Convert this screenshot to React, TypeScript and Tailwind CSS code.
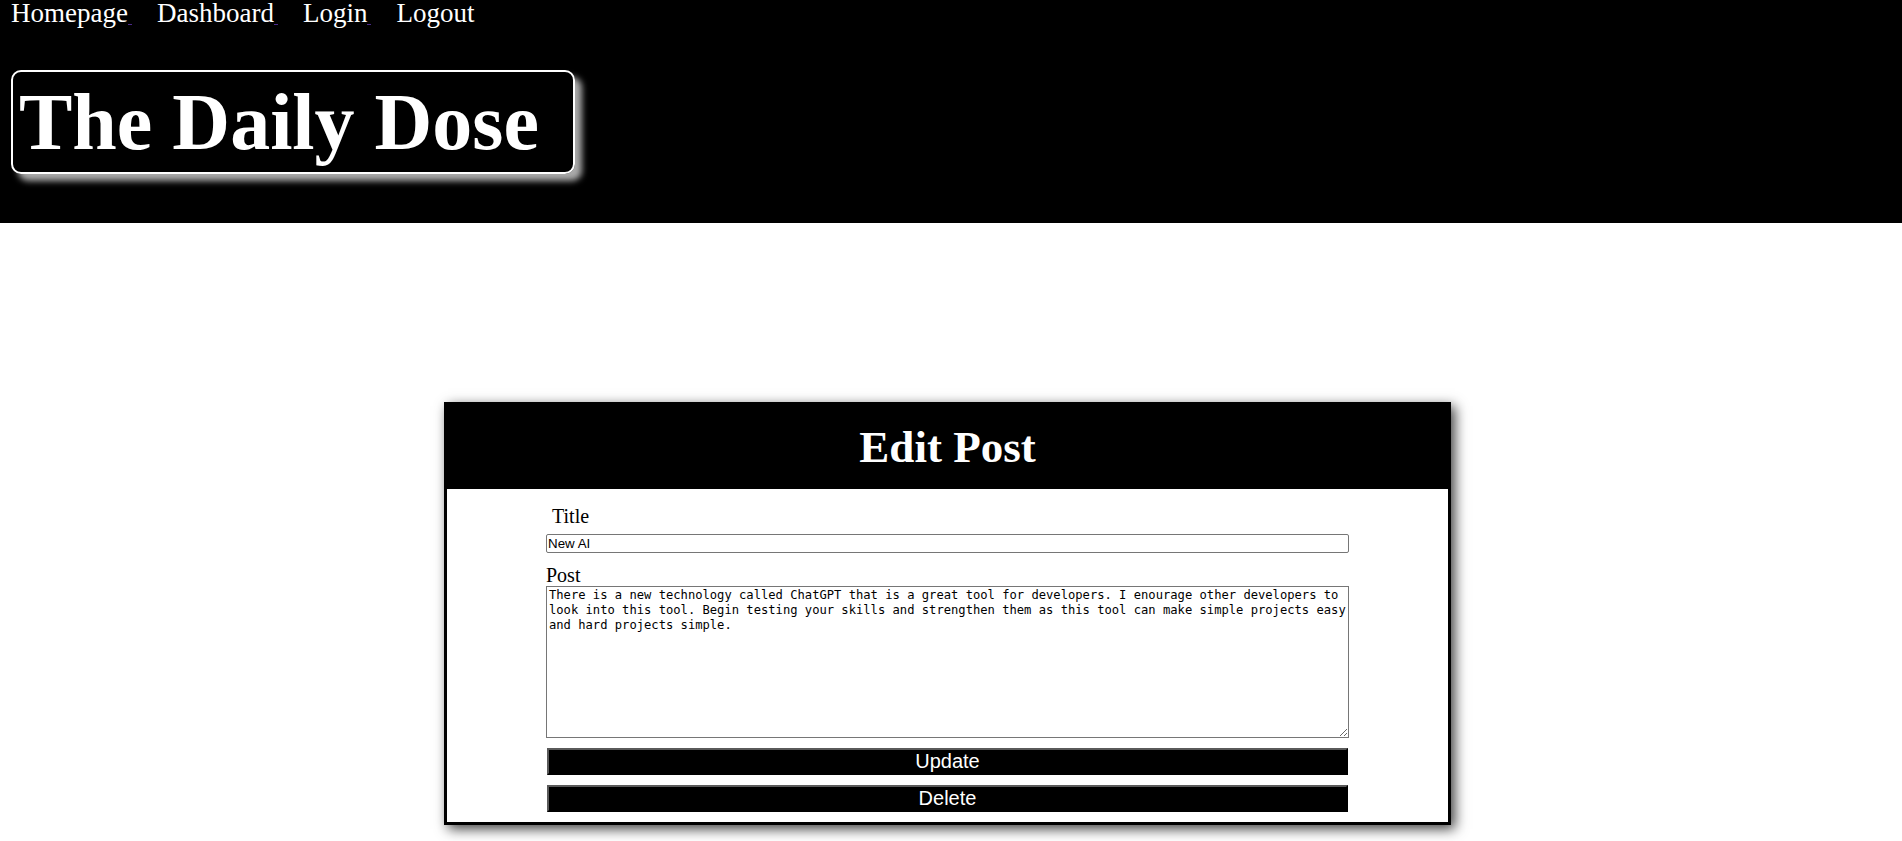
import React from "react";

const links = ["Homepage", "Dashboard", "Login", "Logout"];

const postText =
  "There is a new technology called ChatGPT that is a great tool for developers. I enourage other developers to look into this tool. Begin testing your skills and strengthen them as this tool can make simple projects easy and hard projects simple.";

function Header() {
  return (
    <header className="bg-black h-[223px] text-white">
      <nav className="flex gap-[25px] pl-[11px] text-[27px] leading-[26px]">
        {links.map((l, i) => (
          <a key={l} href="#" className="whitespace-nowrap">
            {l}
            {i < 3 && <span className="inline-block w-[4px] h-px bg-[#4b2a8a] align-[-3px]" />}
          </a>
        ))}
      </nav>
      <div className="mt-[44px] ml-[11px] inline-block border-2 border-white rounded-[10px] pl-[6px] pr-[34px] shadow-[7px_7px_6px_#aaa]">
        <h1 className="text-[80px] leading-[100px] font-bold whitespace-nowrap">The Daily Dose</h1>
      </div>
    </header>
  );
}

function EditPost() {
  return (
    <div className="w-[1007px] border-[3px] border-black bg-white shadow-[4px_4px_12px_rgba(0,0,0,0.75)]">
      <div className="bg-black h-[84px] flex items-center justify-center">
        <h2 className="text-white text-[45px] font-bold leading-none">Edit Post</h2>
      </div>
      <form className="w-[803px] mx-auto pt-[16px] pb-[10px] flex flex-col">
        <label className="text-[20px] leading-[22px] pl-[6px]">Title</label>
        <input
          type="text"
          defaultValue="New AI"
          className="mt-[7px] h-[19px] border border-[#767676] rounded-[2px] px-px text-[13.33px] font-['Liberation_Sans',Arial,sans-serif] text-black outline-none"
        />
        <label className="mt-[11px] text-[20px] leading-[22px]">Post</label>
        <textarea
          defaultValue={postText}
          className="h-[152px] border border-[#767676] pl-[2px] pr-0 py-px text-[12.15px] leading-[15px] font-['DejaVu_Sans_Mono',monospace] text-black outline-none"
        />
        <button
          type="button"
          className="mt-[10px] mx-px h-[27px] bg-black text-white text-[20px] leading-[23px] font-['Liberation_Sans',Arial,sans-serif] border-2 border-t-[#5a5a5a] border-l-[#5a5a5a] border-r-black border-b-black"
        >
          Update
        </button>
        <button
          type="button"
          className="mt-[10px] mx-px h-[27px] bg-black text-white text-[20px] leading-[23px] font-['Liberation_Sans',Arial,sans-serif] border-2 border-t-[#5a5a5a] border-l-[#5a5a5a] border-r-black border-b-black"
        >
          Delete
        </button>
      </form>
    </div>
  );
}

export default function App() {
  return (
    <div className="min-h-screen bg-white font-['Liberation_Serif','Times_New_Roman',serif] text-black">
      <Header />
      <main className="pt-[179px] flex justify-center pr-[7px]">
        <EditPost />
      </main>
    </div>
  );
}
